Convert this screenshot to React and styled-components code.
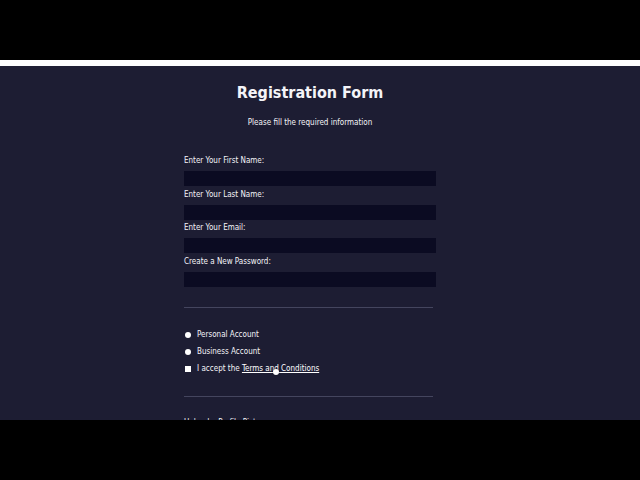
import styled, { createGlobalStyle } from 'styled-components';

const GlobalStyle = createGlobalStyle`
  html, body {
    margin: 0;
    padding: 0;
    background: #000;
  }
  body {
    font-family: "DejaVu Sans Condensed", "DejaVu Sans", sans-serif;
    width: 640px;
    height: 480px;
    overflow: hidden;
  }
`;

const Frame = styled.div`
  display: flex;
  flex-direction: column;
  width: 640px;
  height: 480px;
  background: #000;
`;

const Letterbox = styled.div`
  height: ${(p) => p.$h}px;
  flex-shrink: 0;
  background: #000;
`;

const BrowserEdge = styled.div`
  height: 6px;
  flex-shrink: 0;
  background: #fdfdfd;
`;

const Screen = styled.main`
  position: relative;
  flex: 1;
  overflow: hidden;
  background: #1d1d33;
  color: #f4f4f8;
  display: flex;
  flex-direction: column;
  align-items: center;
  padding-right: 20px;
`;

const Title = styled.h1`
  margin: 17px 0 0;
  font-size: 16px;
  font-weight: bold;
  line-height: 20px;
`;

const Subtitle = styled.p`
  margin: 15px 0 0;
  font-size: 8px;
  line-height: 10px;
`;

const Form = styled.form`
  width: 252px;
  margin-top: 28px;
  display: flex;
  flex-direction: column;
`;

const Field = styled.div`
  display: flex;
  flex-direction: column;
  gap: 5px;
  margin-bottom: 3.5px;
`;

const Label = styled.label`
  font-size: 8px;
  line-height: 10px;
`;

const Input = styled.input`
  box-sizing: border-box;
  width: 100%;
  height: 15px;
  border: none;
  outline: none;
  padding: 0 4px;
  background: #0b0b22;
  color: #fff;
`;

const Divider = styled.hr`
  width: 249px;
  margin: ${(p) => p.$m};
  border: none;
  height: 1px;
  background: #44455e;
  align-self: flex-start;
`;

const Option = styled.label`
  display: flex;
  align-items: center;
  gap: 6px;
  height: 17px;
  padding-left: 1px;
  font-size: 8px;
`;

const Mark = styled.span`
  width: 6px;
  height: 6px;
  background: #fff;
  border-radius: ${(p) => (p.$round ? '50%' : '0')};
  flex-shrink: 0;
`;

const Terms = styled.a`
  color: #fff;
  text-decoration: underline;
`;

const Cut = styled.div`
  margin-top: 21px;
  font-size: 8px;
  line-height: 10px;
`;

const Pointer = styled.span`
  position: absolute;
  left: 273px;
  top: 303px;
  width: 6px;
  height: 6px;
  border-radius: 50%;
  background: #fff;
  box-shadow: 0 0 2px rgba(0, 0, 0, 0.6);
`;

export default function App() {
  const fields = [
    'Enter Your First Name:',
    'Enter Your Last Name:',
    'Enter Your Email:',
    'Create a New Password:',
  ];

  return (
    <>
      <GlobalStyle />
      <Frame>
        <Letterbox $h={60} />
        <BrowserEdge />
        <Screen>
          <Title>Registration Form</Title>
          <Subtitle>Please fill the required information</Subtitle>
          <Form onSubmit={(e) => e.preventDefault()}>
            {fields.map((f) => (
              <Field key={f}>
                <Label>{f}</Label>
                <Input type={f.includes('Password') ? 'password' : 'text'} />
              </Field>
            ))}
            <Divider $m="17px 0 18px" />
            <Option>
              <Mark $round />
              Personal Account
            </Option>
            <Option>
              <Mark $round />
              Business Account
            </Option>
            <Option>
              <Mark />
              <span>
                I accept the <Terms href="#">Terms and Conditions</Terms>
              </span>
            </Option>
            <Divider $m="19px 0 0" />
            <Cut>Upload a Profile Picture</Cut>
          </Form>
          <Pointer />
        </Screen>
        <Letterbox $h={60} />
      </Frame>
    </>
  );
}
